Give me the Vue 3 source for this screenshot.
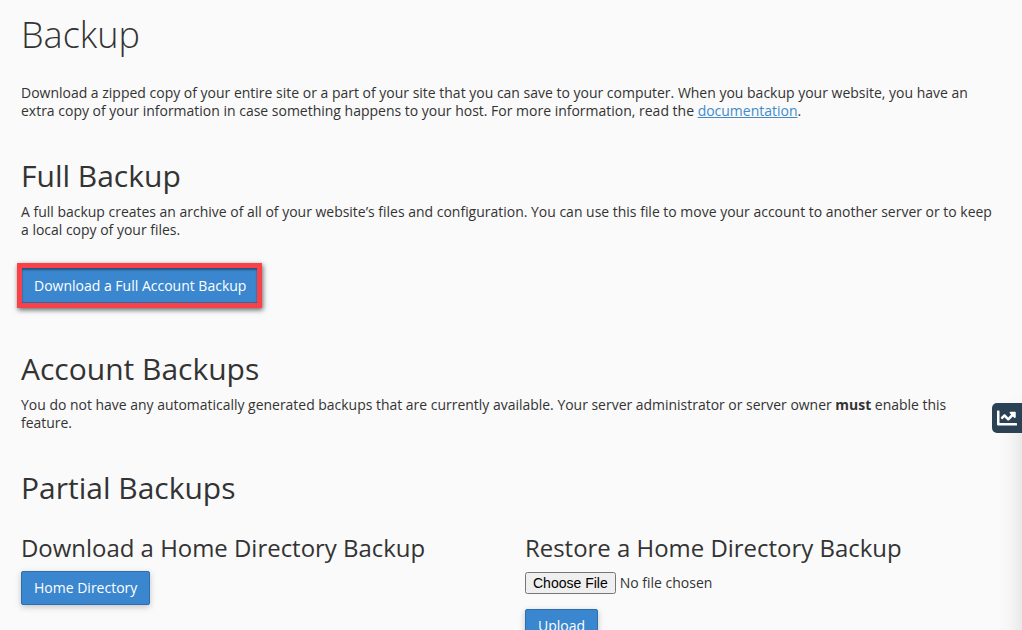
<script setup>
</script>

<template>
  <main class="page">
    <h1 class="title">Backup</h1>
    <p class="intro">Download a zipped copy of your entire site or a part of your site that you can save to your computer. When you backup your website, you have an extra copy of your information in case something happens to your host. For more information, read the <a href="#" class="doc">documentation</a>.</p>

    <h2 class="section full">Full Backup</h2>
    <p class="text">A full backup creates an archive of all of your website’s files and configuration. You can use this file to move your account to another server or to keep a local copy of your files.</p>
    <button class="btn highlighted">Download a Full Account Backup</button>

    <h2 class="section account">Account Backups</h2>
    <p class="text narrow">You do not have any automatically generated backups that are currently available. Your server administrator or server owner <strong>must</strong> enable this feature.</p>

    <h2 class="section partial">Partial Backups</h2>
    <div class="columns">
      <section>
        <h3 class="sub">Download a Home Directory Backup</h3>
        <button class="btn home">Home Directory</button>
      </section>
      <section>
        <h3 class="sub">Restore a Home Directory Backup</h3>
        <input type="file" class="file" />
        <button class="btn upload">Upload</button>
      </section>
    </div>

    <div class="edge"></div>
    <div class="tab">
      <svg width="20" height="20" viewBox="0 0 512 512">
        <path fill="#fff" d="M496 384H64V80c0-8.84-7.16-16-16-16H16C7.16 64 0 71.16 0 80v336c0 17.67 14.33 32 32 32h464c8.84 0 16-7.16 16-16v-32c0-8.84-7.16-16-16-16zM464 96H345.94c-21.38 0-32.09 25.85-16.97 40.97l32.4 32.4L288 242.75l-73.37-73.37c-12.5-12.5-32.76-12.5-45.25 0l-68.69 68.69c-6.25 6.25-6.25 16.38 0 22.63l22.62 22.62c6.25 6.25 16.38 6.25 22.63 0L192 237.25l73.37 73.37c12.5 12.5 32.76 12.5 45.25 0l96-96 32.4 32.4c15.12 15.12 40.97 4.41 40.97-16.97V112c0-8.84-7.16-16-16-16z"/>
      </svg>
    </div>
  </main>
</template>

<style>
html, body { margin: 0; background: #fafafa; overflow: hidden; }
</style>

<style scoped>
.page {
  width: 1022px;
  height: 630px;
  box-sizing: border-box;
  padding: 0 21px;
  position: relative;
  overflow: hidden;
  font-family: "Open Sans", sans-serif;
  font-size: 13.97px;
  line-height: 18px;
  color: #333;
  background: #fafafa;
}
.title {
  margin: 0;
  padding-top: 11px;
  font-size: 36px;
  line-height: 48px;
  font-weight: 300;
}
.intro { margin: 25px 0 0; font-size: 13.99px; }
.doc { color: #428bca; }
.section {
  margin: 0;
  font-size: 30px;
  line-height: 40px;
  font-weight: 400;
}
.full { margin-top: 36px; }
.text { margin: 7px 0 0; }
.narrow { font-size: 13.96px; max-width: 960px; }
.btn {
  display: block;
  padding: 6px 12px;
  font-family: "Open Sans", sans-serif;
  font-size: 14px;
  line-height: 20px;
  color: #fff;
  background: #3a87cf;
  border: 1px solid #2d6fae;
  border-radius: 2px;
  box-shadow: 0 2px 6px rgba(0, 0, 0, 0.22);
}
.highlighted {
  margin: 24px 0 0 -4px;
  height: 45px;
  padding: 0 11px 0 12px;
  border: 5px solid #f9414a;
  border-radius: 0;
  box-shadow:
    inset 0 2px 2px rgba(0, 0, 0, 0.4),
    inset 0 -1px 1px rgba(0, 0, 0, 0.22),
    1px 2px 5px rgba(0, 0, 0, 0.6);
}
.account { margin-top: 41px; }
.partial { margin-top: 36px; }
.columns {
  display: grid;
  grid-template-columns: 504px 1fr;
  margin-top: 24px;
}
.sub {
  margin: 0;
  font-size: 23.95px;
  line-height: 32px;
  font-weight: 400;
}
.home { margin-top: 7px; }
.file {
  display: block;
  margin-top: 8px;
  font-family: "Open Sans", sans-serif;
  font-size: 14px;
  color: #333;
}
.upload { margin-top: 15px; }
.edge {
  position: absolute;
  top: 410px;
  right: -24px;
  width: 24px;
  height: 400px;
  box-shadow: 0 0 24px rgba(0, 0, 0, 0.14);
}
.tab {
  position: absolute;
  left: 992px;
  top: 403px;
  width: 30px;
  height: 30px;
  display: flex;
  align-items: center;
  justify-content: center;
  background: #2b4255;
  border-radius: 5px 0 0 5px;
}
</style>
